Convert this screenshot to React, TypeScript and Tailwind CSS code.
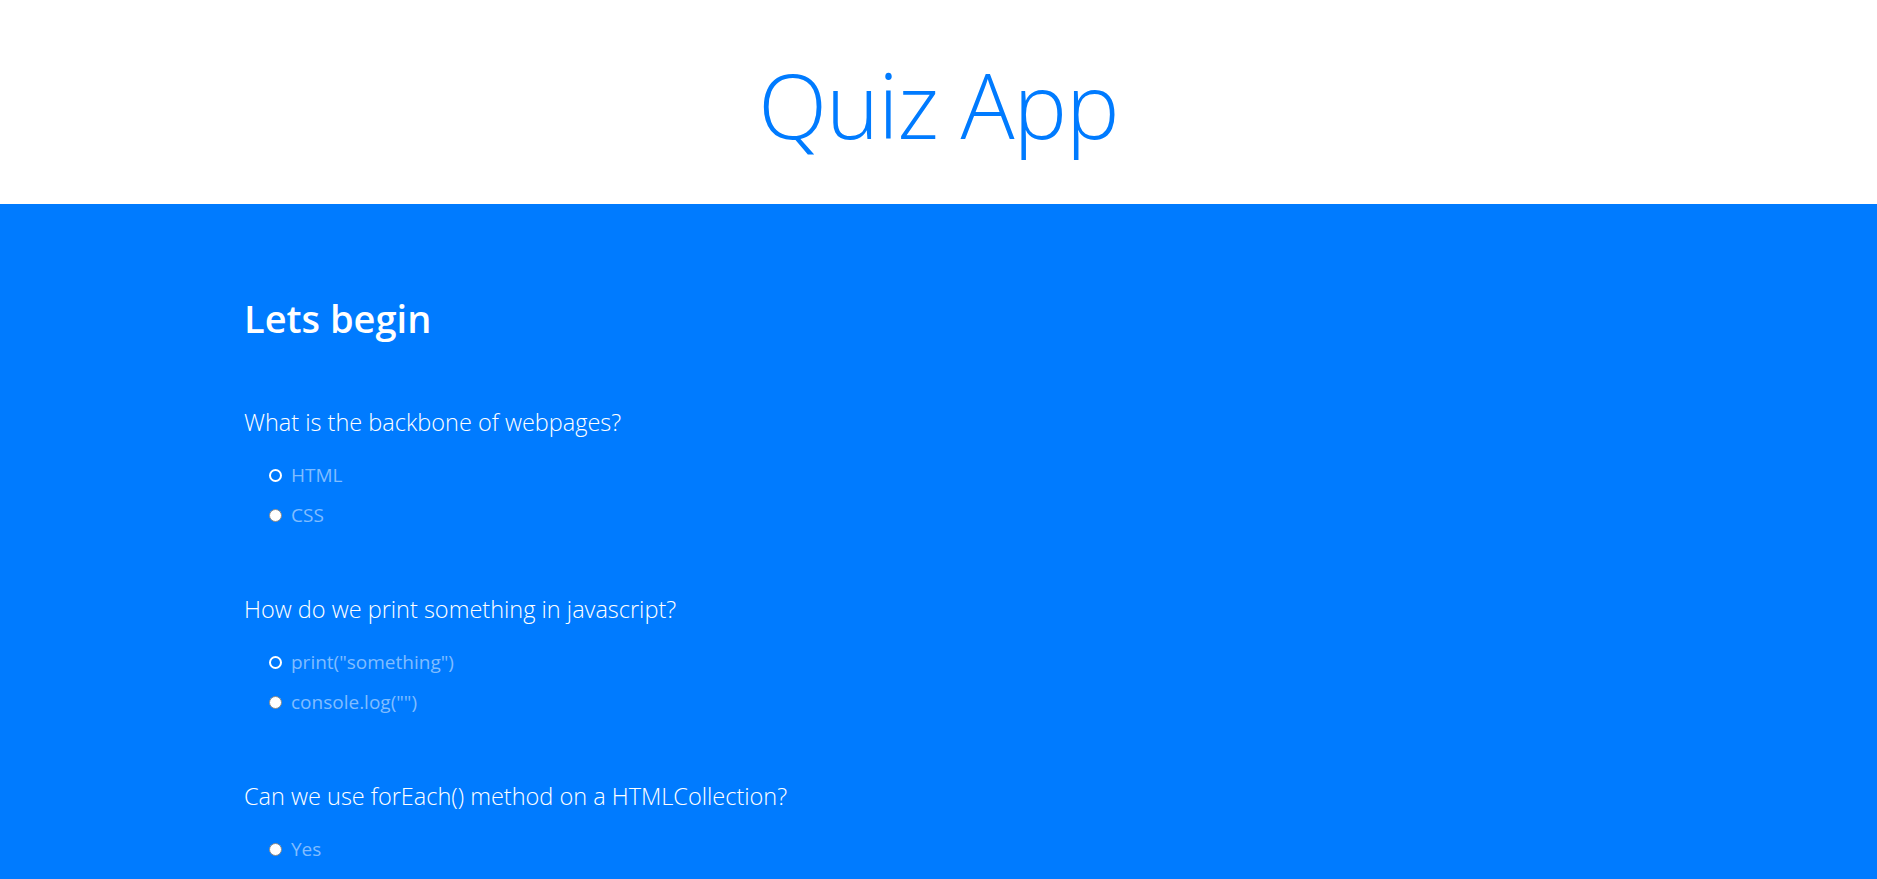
import React from "react";

const questions = [
  { q: "What is the backbone of webpages?", options: ["HTML", "CSS"] },
  { q: "How do we print something in javascript?", options: ['print("something")', 'console.log("")'] },
  { q: "Can we use forEach() method on a HTMLCollection?", options: ["Yes", "No"] },
];

function Radio({ ring }: { ring: boolean }) {
  return ring ? (
    <span className="inline-block w-[13px] h-[13px] rounded-full border-2 border-white box-border shrink-0" />
  ) : (
    <span className="inline-block w-[13px] h-[13px] rounded-full bg-white border border-[#8a8a8a] box-border shrink-0" />
  );
}

export default function App() {
  return (
    <div className="min-h-screen bg-[#007bff]" style={{ fontFamily: '"Open Sans", "Noto Sans", sans-serif' }}>
      <header className="h-[204px] bg-white flex items-center justify-center">
        <h1 className="text-[90px] font-light leading-[108px] text-[#007bff] tracking-[-1px] mt-[4px]">Quiz App</h1>
      </header>
      <main className="bg-[#007bff] pl-[244px] pt-[91px] pb-[40px]">
        <h2 className="text-[38px] leading-[46px] font-semibold text-white">Lets begin</h2>
        <div className="mt-[65px] flex flex-col gap-[66px]">
          {questions.map((item, qi) => (
            <div key={qi}>
              <p className="text-[23.5px] leading-[32px] font-light text-white">{item.q}</p>
              <div className="mt-[25px] flex flex-col gap-[16px] pl-[25px]">
                {item.options.map((o, oi) => (
                  <label key={oi} className="flex items-center gap-[9px] h-[24px]">
                    <Radio ring={oi === 0 && qi < 2} />
                    <span className="text-[19px] leading-[24px] text-[#80bdff]">{o}</span>
                  </label>
                ))}
              </div>
            </div>
          ))}
        </div>
      </main>
    </div>
  );
}
